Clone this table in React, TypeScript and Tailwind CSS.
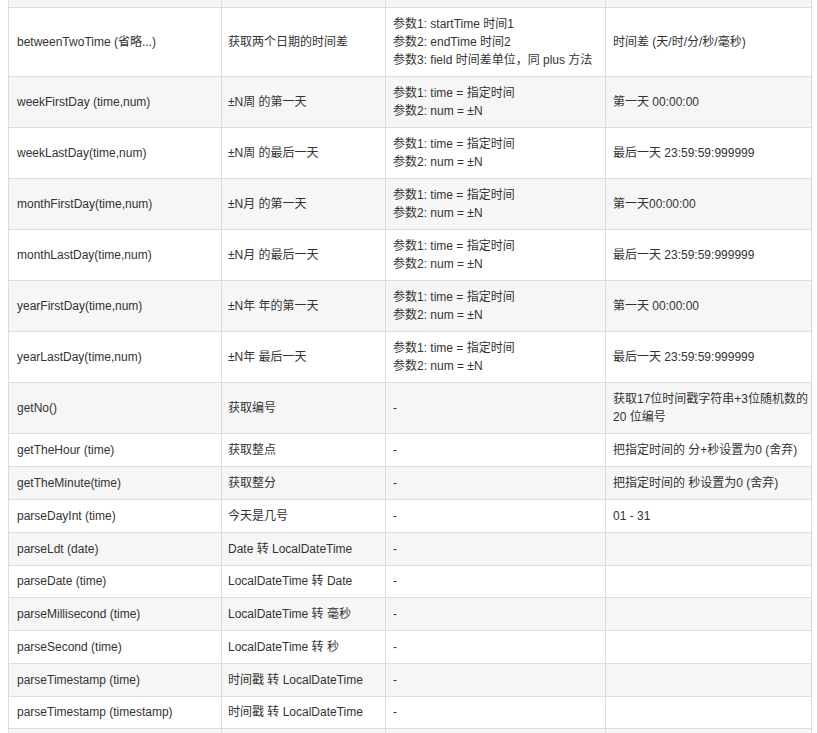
import React from "react";

type Row = { a: string; b: string; c: string[]; d: string[]; h: string };

const rows: Row[] = [
  { h: "h-[69px]", a: "betweenTwoTime (省略...)", b: "获取两个日期的时间差", c: ["参数1: startTime 时间1", "参数2: endTime 时间2", "参数3: field 时间差单位，同 plus 方法"], d: ["时间差 (天/时/分/秒/毫秒)"] },
  { h: "h-[51px]", a: "weekFirstDay (time,num)", b: "±N周 的第一天", c: ["参数1: time = 指定时间", "参数2: num = ±N"], d: ["第一天 00:00:00"] },
  { h: "h-[51px]", a: "weekLastDay(time,num)", b: "±N周 的最后一天", c: ["参数1: time = 指定时间", "参数2: num = ±N"], d: ["最后一天 23:59:59:999999"] },
  { h: "h-[51px]", a: "monthFirstDay(time,num)", b: "±N月 的第一天", c: ["参数1: time = 指定时间", "参数2: num = ±N"], d: ["第一天00:00:00"] },
  { h: "h-[51px]", a: "monthLastDay(time,num)", b: "±N月 的最后一天", c: ["参数1: time = 指定时间", "参数2: num = ±N"], d: ["最后一天 23:59:59:999999"] },
  { h: "h-[51px]", a: "yearFirstDay(time,num)", b: "±N年 年的第一天", c: ["参数1: time = 指定时间", "参数2: num = ±N"], d: ["第一天 00:00:00"] },
  { h: "h-[51px]", a: "yearLastDay(time,num)", b: "±N年 最后一天", c: ["参数1: time = 指定时间", "参数2: num = ±N"], d: ["最后一天 23:59:59:999999"] },
  { h: "h-[51px]", a: "getNo()", b: "获取编号", c: ["-"], d: ["获取17位时间戳字符串+3位随机数的", "20 位编号"] },
  { h: "h-[33px]", a: "getTheHour (time)", b: "获取整点", c: ["-"], d: ["把指定时间的 分+秒设置为0 (舍弃)"] },
  { h: "h-[33px]", a: "getTheMinute(time)", b: "获取整分", c: ["-"], d: ["把指定时间的 秒设置为0 (舍弃)"] },
  { h: "h-[33px]", a: "parseDayInt (time)", b: "今天是几号", c: ["-"], d: ["01 - 31"] },
  { h: "h-[33px]", a: "parseLdt (date)", b: "Date 转 LocalDateTime", c: ["-"], d: [] },
  { h: "h-[32px]", a: "parseDate (time)", b: "LocalDateTime 转 Date", c: ["-"], d: [] },
  { h: "h-[33px]", a: "parseMillisecond (time)", b: "LocalDateTime 转 毫秒", c: ["-"], d: [] },
  { h: "h-[33px]", a: "parseSecond (time)", b: "LocalDateTime 转 秒", c: ["-"], d: [] },
  { h: "h-[33px]", a: "parseTimestamp (time)", b: "时间戳 转 LocalDateTime", c: ["-"], d: [] },
  { h: "h-[32px]", a: "parseTimestamp (timestamp)", b: "时间戳 转 LocalDateTime", c: ["-"], d: [] },
];

const base = "border border-[#dddddd] py-0 align-middle whitespace-nowrap";

function Lines({ items }: { items: string[] }) {
  return (
    <>
      {items.map((t, i) => (
        <div key={i}>{t}</div>
      ))}
    </>
  );
}

export default function App() {
  return (
    <div className="bg-white h-[733px] overflow-hidden">
      <table
        className="ml-[8px] w-[803px] table-fixed border-collapse text-[12px] leading-[18px] text-[#333333]"
        style={{ fontFamily: '"Liberation Sans", Arial, "Noto Sans CJK SC", sans-serif' }}
      >
        <colgroup>
          <col className="w-[213px]" />
          <col className="w-[164px]" />
          <col className="w-[220px]" />
          <col className="w-[206px]" />
        </colgroup>
        <tbody>
          <tr className="bg-[#f6f6f6] h-[7px]">
            <td className="border border-t-0 border-[#dddddd] p-0"></td>
            <td className="border border-t-0 border-[#dddddd] p-0"></td>
            <td className="border border-t-0 border-[#dddddd] p-0"></td>
            <td className="border border-t-0 border-[#dddddd] p-0"></td>
          </tr>
          {rows.map((r, i) => (
            <tr key={i} className={`${r.h} ${i % 2 === 0 ? "bg-white" : "bg-[#f6f6f6]"}`}>
              <td className={`${base} pl-[8px] pr-[8px]`}>{r.a}</td>
              <td className={`${base} pl-[6px] pr-[6px]`}>{r.b}</td>
              <td className={`${base} pl-[7px] pr-[7px]`}>
                <Lines items={r.c} />
              </td>
              <td className={`${base} pl-[7px] pr-[4px]`}>
                {r.d.length ? <Lines items={r.d} /> : null}
              </td>
            </tr>
          ))}
          <tr className="bg-[#f6f6f6] h-[33px]">
            <td className={base}>&nbsp;</td>
            <td className={base}>&nbsp;</td>
            <td className={base}>&nbsp;</td>
            <td className={base}>&nbsp;</td>
          </tr>
        </tbody>
      </table>
    </div>
  );
}
